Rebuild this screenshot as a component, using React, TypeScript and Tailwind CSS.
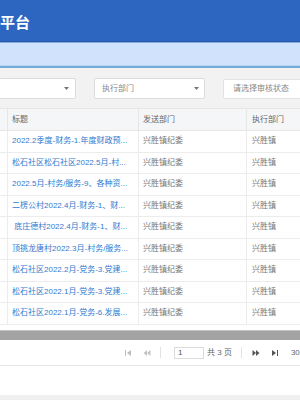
const FONT = { fontFamily: '"Liberation Sans", "Noto Sans CJK SC", sans-serif' }

const ROWS = [
  '2022.2季度-财务-1.年度财政预...',
  '松石社区松石社区2022.5月-村...',
  '2022.5月-村务/服务-9、各种资...',
  '二楞公村2022.4月-财务-1、财...',
  ' 底庄德村2022.4月-财务-1、财...',
  '顶挑龙唐村2022.3月-村务/服务...',
  '松石社区2022.2月-党务-3.党建...',
  '松石社区2022.1月-党务-3.党建...',
  '松石社区2022.1月-党务-6.发展...',
]

function Caret() {
  return (
    <svg width="5" height="3" viewBox="0 0 5 3" className="shrink-0">
      <path d="M0 0 L5 0 L2.5 3 Z" fill="#777" />
    </svg>
  )
}

function PageIcon({ kind, color }: { kind: 'first' | 'prev' | 'next' | 'last'; color: string }) {
  return (
    <svg width="8" height="6" viewBox="0 0 8 6">
      {kind === 'first' && (
        <>
          <rect x="1" y="0" width="1" height="6" fill={color} />
          <path d="M7 0 L7 6 L3 3 Z" fill={color} />
        </>
      )}
      {kind === 'prev' && (
        <>
          <path d="M4 0 L4 6 L0.5 3 Z" fill={color} />
          <path d="M7.5 0 L7.5 6 L4 3 Z" fill={color} />
        </>
      )}
      {kind === 'next' && (
        <>
          <path d="M0.5 0 L0.5 6 L4 3 Z" fill={color} />
          <path d="M4 0 L4 6 L7.5 3 Z" fill={color} />
        </>
      )}
      {kind === 'last' && (
        <>
          <path d="M1 0 L1 6 L5 3 Z" fill={color} />
          <rect x="6" y="0" width="1" height="6" fill={color} />
        </>
      )}
    </svg>
  )
}

export default function App() {
  return (
    <div className="w-[300px] h-[400px] overflow-hidden bg-[#f2f2f2] flex flex-col" style={FONT}>
      {/* top bar */}
      <div className="h-[41px] shrink-0 bg-[#2d66c0] flex items-center pt-[4px]">
        <span className="text-white text-[15px] font-bold leading-none whitespace-nowrap">平台</span>
      </div>
      <div className="h-[1px] shrink-0 bg-[#2858a8]" />
      <div className="h-[1px] shrink-0 bg-[#86ace0]" />
      <div className="h-[22px] shrink-0 bg-[#d1e3fc]" />
      <div className="h-[1px] shrink-0 bg-[#b9d5f1]" />
      <div className="h-[2px] shrink-0 bg-[#72acda]" />

      {/* filters */}
      <div className="h-[40px] shrink-0 flex items-center gap-[18px] pt-[1px] whitespace-nowrap">
        <div className="w-[77px] h-[21px] shrink-0 bg-white border border-[#dcdcdc] rounded-[2px] ml-[-1px] flex items-center justify-end pr-[6px]">
          <Caret />
        </div>
        <div className="w-[111px] h-[21px] shrink-0 bg-white border border-[#dcdcdc] rounded-[2px] flex items-center justify-between pl-[7px] pr-[5px]">
          <span className="text-[8px] text-[#888]">执行部门</span>
          <Caret />
        </div>
        <div className="w-[90px] h-[20px] shrink-0 bg-white border border-[#e2e2e2] rounded-[2px] flex items-center pl-[9px]">
          <span className="text-[8px] text-[#888]">请选择审核状态</span>
        </div>
      </div>

      {/* table */}
      <div className="shrink-0 bg-white border-t border-[#e6e6e6] text-[8px] whitespace-nowrap">
        <div className="flex h-[22px] bg-[#f5f6f8] border-b border-[#e6e6e6] text-[#666]">
          <div className="w-[8px] shrink-0 border-r border-[#e6e6e6]" />
          <div className="w-[131px] shrink-0 border-r border-[#e6e6e6] flex items-center pl-[4px]">标题</div>
          <div className="w-[108px] shrink-0 border-r border-[#e6e6e6] flex items-center pl-[4px]">发送部门</div>
          <div className="w-[53px] shrink-0 flex items-center pl-[5px]">执行部门</div>
        </div>
        <div className="h-[199px] overflow-hidden">
          {ROWS.map((title, i) => (
            <div key={i} className="flex h-[21.5px] border-b border-[#ececec]">
              <div className="w-[8px] shrink-0 border-r border-[#ececec]" />
              <div className="w-[131px] shrink-0 border-r border-[#ececec] flex items-center pl-[4px] overflow-hidden">
                <span className="text-[#2f7bd0] whitespace-pre">{title}</span>
              </div>
              <div className="w-[108px] shrink-0 border-r border-[#ececec] flex items-center pl-[4px] text-[#777]">兴胜镇纪委</div>
              <div className="w-[53px] shrink-0 flex items-center pl-[5px] text-[#777]">兴胜镇</div>
            </div>
          ))}
        </div>
      </div>

      {/* horizontal scrollbar */}
      <div className="h-[10px] shrink-0 bg-[#a3a3a3] border-t border-[#c4c4c4]" />

      {/* pagination */}
      <div className="h-[26px] shrink-0 bg-white border-b border-[#e6e6e6] flex items-center text-[8px] text-[#666] whitespace-nowrap pl-[124px]">
        <PageIcon kind="first" color="#bdbdbd" />
        <div className="ml-[11px]"><PageIcon kind="prev" color="#c4c4c4" /></div>
        <div className="ml-[9px] w-[1px] h-[11px] bg-[#e2e2e2]" />
        <div className="ml-[13px] w-[30px] h-[12px] border border-[#dcdcdc] flex items-center pl-[3px] text-[#555]">1</div>
        <span className="ml-[3px]">共 3 页</span>
        <div className="ml-[9px] w-[1px] h-[11px] bg-[#e2e2e2]" />
        <div className="ml-[10px]"><PageIcon kind="next" color="#555" /></div>
        <div className="ml-[11px]"><PageIcon kind="last" color="#555" /></div>
        <span className="ml-[12px]">30</span>
      </div>
      <div className="h-[29px] shrink-0 bg-white" />
      <div className="flex-1 bg-[#f0f0f0]" />
    </div>
  )
}
